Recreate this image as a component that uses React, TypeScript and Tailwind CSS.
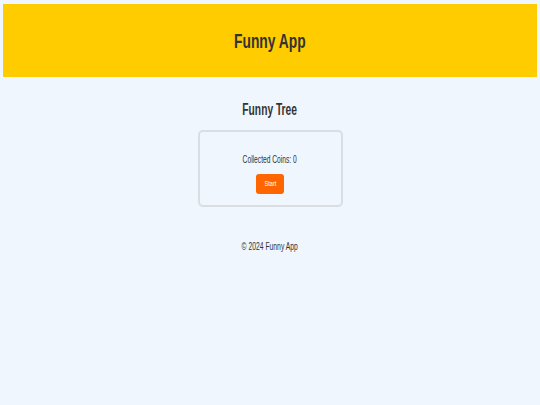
export default function App() {
  return (
    <div
      className="min-h-screen bg-[#eff6fd] px-[3px] pt-[4px] text-[#333333]"
      style={{ fontFamily: '"Liberation Sans", Arial, sans-serif' }}
    >
      <header className="flex h-[73px] items-center justify-center bg-[#ffcc00]">
        <h1 className="inline-block scale-x-[0.69] text-[20px] font-bold leading-none">Funny App</h1>
      </header>

      <main className="flex flex-col items-center">
        <h2 className="mt-[23px] inline-block scale-x-[0.64] text-[16px] font-bold leading-[20px]">
          Funny Tree
        </h2>

        <div className="mt-[10px] flex h-[77px] w-[145px] flex-col items-center rounded-[5px] border-2 border-[#dadde2]">
          <p className="mt-[20px] inline-block scale-x-[0.58] text-[11.5px] leading-[14px]">Collected Coins: 0</p>
          <button className="mt-[8px] flex h-[20px] w-[28px] items-center justify-center rounded-[3px] bg-[#ff6600] leading-none text-white">
            <span className="inline-block scale-x-[0.7] text-[8px] leading-none">Start</span>
          </button>
        </div>

        <footer className="mt-[32px] inline-block scale-x-[0.59] text-[11.5px] leading-[14px]">
          © 2024 Funny App
        </footer>
      </main>
    </div>
  );
}
